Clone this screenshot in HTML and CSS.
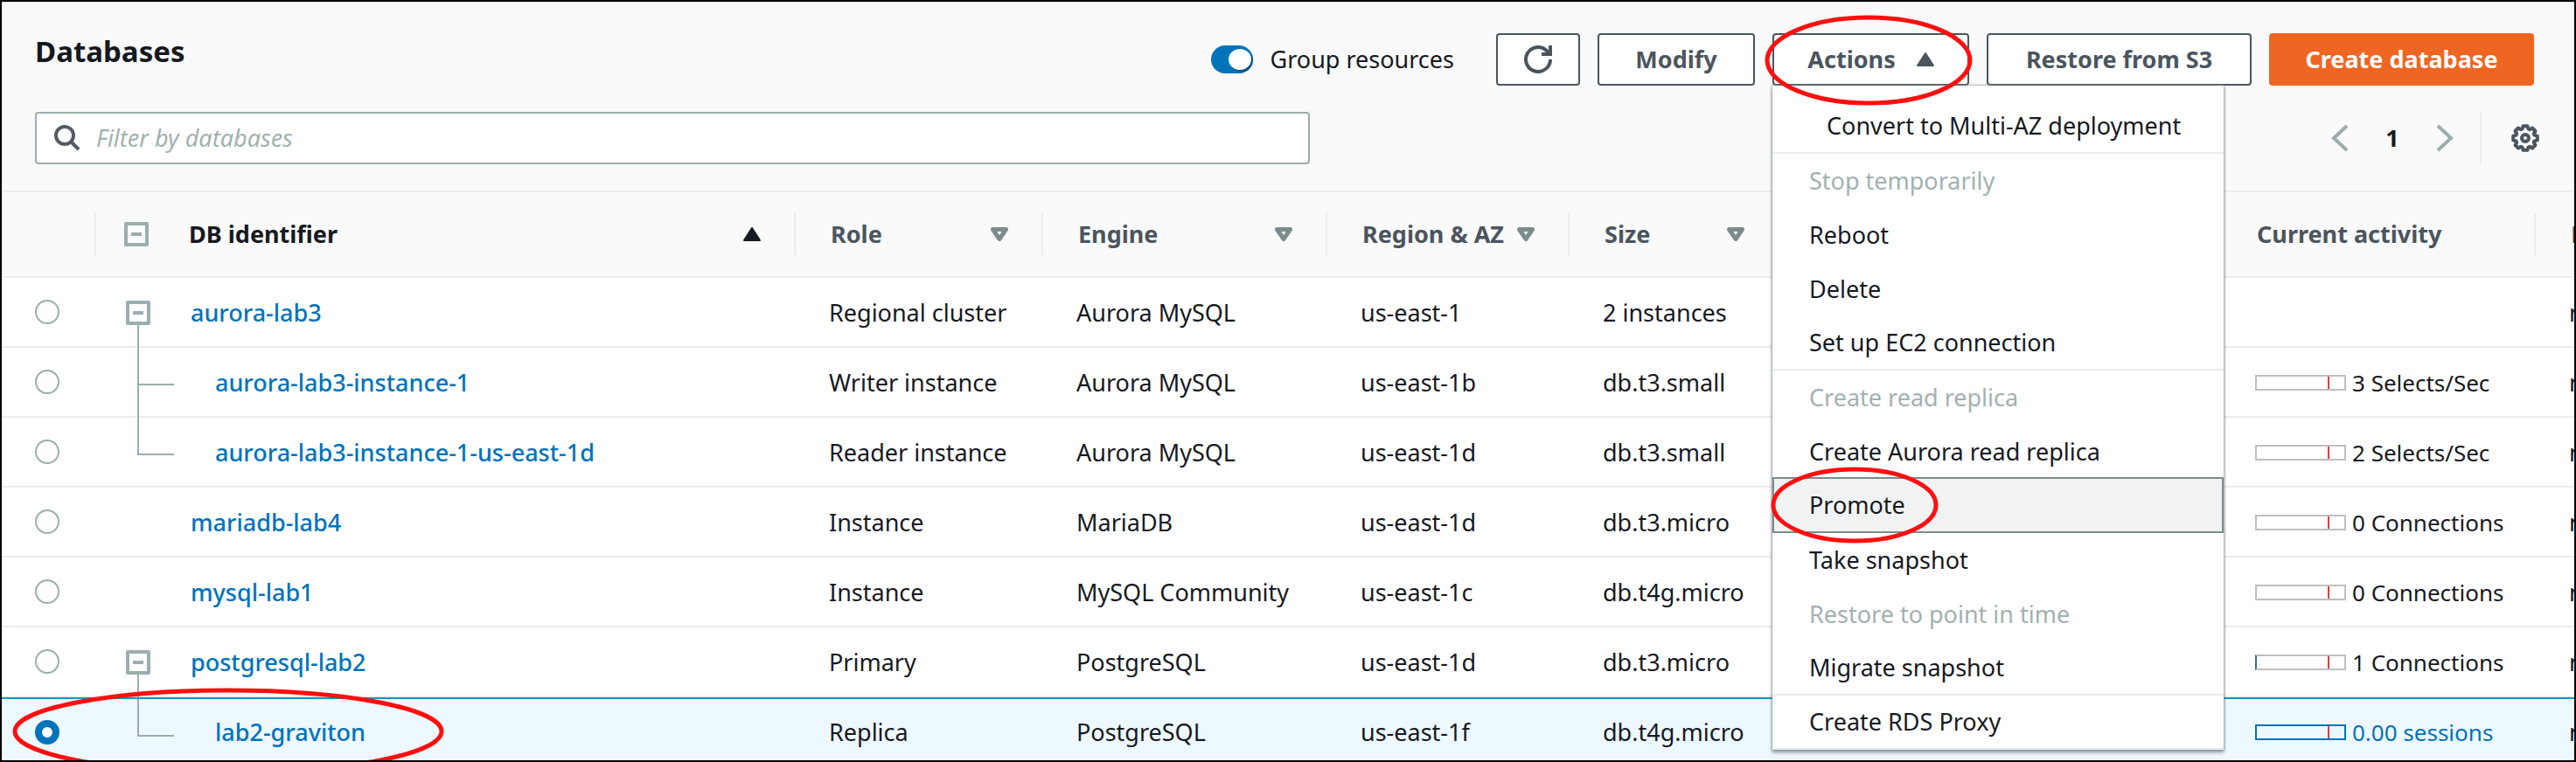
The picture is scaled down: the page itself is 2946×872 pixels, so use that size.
FILE: index.html
```html
<!DOCTYPE html>
<html lang="en">
<head>
<meta charset="utf-8">
<title>Databases</title>
<link rel="stylesheet" href="styles.css">
</head>
<body>
<svg class="defs" aria-hidden="true">
  <symbol id="collapse" viewBox="0 0 28 28"><rect x="2" y="2" width="24" height="24" fill="none" stroke="currentColor" stroke-width="4" stroke-linejoin="round"/><path d="M8 14h12" stroke="currentColor" stroke-width="4"/></symbol>
  <symbol id="sort" viewBox="0 0 20 16"><path d="M2.500 2.500h15L10 13.500z" fill="none" stroke="currentColor" stroke-width="5" stroke-linejoin="round"/></symbol>
  <symbol id="up" viewBox="0 0 20 16"><path d="M10 1 1 15h18z" fill="currentColor" stroke="currentColor" stroke-width="2" stroke-linejoin="round"/></symbol>
</svg>
<main class="panel">
  <header class="top">
    <div class="title-row">
      <h1 class="title">Databases</h1>
      <label class="group"><input class="switch" type="checkbox" role="switch" checked>Group resources</label>
      <div class="buttons">
        <button class="btn refresh" aria-label="Refresh"><svg width="32" height="32" viewBox="0 0 32 32" fill="none" stroke="currentColor" stroke-width="4"><path d="M30 16a14 14 0 1 1-4.500-10.300L29 9.500"/><path d="M30 0v10H20"/></svg></button>
        <button class="btn modify">Modify</button>
        <div class="actions">
          <button class="btn actions-btn" aria-expanded="true">Actions<svg width="20" height="16"><use href="#up"/></svg></button>
          <ul class="menu">
            <li><button class="item indent line">Convert to Multi-AZ deployment</button></li>
            <li><button class="item" disabled>Stop temporarily</button></li>
            <li><button class="item">Reboot</button></li>
            <li><button class="item">Delete</button></li>
            <li><button class="item line">Set up EC2 connection</button></li>
            <li><button class="item" disabled>Create read replica</button></li>
            <li><button class="item">Create Aurora read replica</button></li>
            <li class="marked"><button class="item current">Promote</button><svg class="ring ring-promote" viewBox="0 0 190 86"><ellipse cx="95" cy="43" rx="93" ry="41"/></svg></li>
            <li><button class="item">Take snapshot</button></li>
            <li><button class="item" disabled>Restore to point in time</button></li>
            <li><button class="item line">Migrate snapshot</button></li>
            <li><button class="item line">Create RDS Proxy</button></li>
          </ul>
          <svg class="ring ring-actions" viewBox="0 0 236 102"><ellipse cx="118" cy="51" rx="116" ry="49"/></svg>
        </div>
        <button class="btn restore">Restore from S3</button>
        <button class="btn primary">Create database</button>
      </div>
    </div>
    <div class="filter-row">
      <label class="search">
        <svg width="32" height="32" viewBox="0 0 32 32" fill="none" stroke="currentColor" stroke-width="4"><circle cx="14" cy="13" r="10"/><path d="m21 20 9 9"/></svg>
        <input class="search-input" type="text" placeholder="Filter by databases" aria-label="Filter by databases">
      </label>
      <nav class="pager" aria-label="Pages">
        <button class="icon-btn arrow" aria-label="Previous page"><svg width="20" height="32" viewBox="0 0 20 32" fill="none" stroke="currentColor" stroke-width="4"><path d="M18 2 3 16l15 14"/></svg></button>
        <span class="page">1</span>
        <button class="icon-btn arrow" aria-label="Next page"><svg width="20" height="32" viewBox="0 0 20 32" fill="none" stroke="currentColor" stroke-width="4"><path d="m2 2 15 14L2 30"/></svg></button>
        <span class="rule"></span>
        <button class="icon-btn gear" aria-label="Preferences"><svg width="32" height="32" viewBox="0 0 32 32" fill="none" stroke="currentColor" stroke-width="4" stroke-linejoin="round"><path d="M18.400 2.200 19.400 5.500 21 6.200 24 4.500 27.500 8 25.800 11 26.500 12.600 29.800 13.600V18.400L26.500 19.400 25.800 21 27.500 24 24 27.500 21 25.800 19.400 26.500 18.400 29.800H13.600L12.600 26.500 11 25.800 8 27.500 4.500 24 6.200 21 5.500 19.400 2.200 18.400V13.600L5.500 12.600 6.200 11 4.500 8 8 4.500 11 6.200 12.600 5.500 13.600 2.200z"/><circle cx="16" cy="16" r="4"/></svg></button>
      </nav>
    </div>
  </header>
  <table class="grid">
    <colgroup><col class="c-pick"><col><col class="c-role"><col class="c-engine"><col class="c-region"><col class="c-size"><col class="c-gap"><col class="c-activity"><col class="c-last"></colgroup>
    <thead>
      <tr>
        <th></th>
        <th class="sorted"><div class="head id-head"><button class="icon-btn collapse" aria-label="Collapse all"><svg width="28" height="28"><use href="#collapse"/></svg></button><span>DB identifier</span><svg class="sort" width="20" height="16"><use href="#up"/></svg></div></th>
        <th><div class="head">Role<svg class="sort" width="20" height="16"><use href="#sort"/></svg></div></th>
        <th><div class="head">Engine<svg class="sort" width="20" height="16"><use href="#sort"/></svg></div></th>
        <th><div class="head">Region &amp; AZ<svg class="sort" width="20" height="16"><use href="#sort"/></svg></div></th>
        <th><div class="head">Size<svg class="sort" width="20" height="16"><use href="#sort"/></svg></div></th>
        <th></th>
        <th><div class="head">Current activity</div></th>
        <th><div class="head">Maintenance</div></th>
      </tr>
    </thead>
    <tbody>
      <tr>
        <td class="pick"><input class="radio" type="radio" name="db" aria-label="aurora-lab3"></td>
        <td class="id parent"><div class="node"><button class="icon-btn collapse" aria-label="Collapse aurora-lab3"><svg width="28" height="28"><use href="#collapse"/></svg></button><a href="#">aurora-lab3</a></div></td>
        <td>Regional cluster</td><td>Aurora MySQL</td><td>us-east-1</td><td>2 instances</td><td></td><td></td><td>none</td>
      </tr>
      <tr>
        <td class="pick"><input class="radio" type="radio" name="db" aria-label="aurora-lab3-instance-1"></td>
        <td class="id child more"><div class="node"><a href="#">aurora-lab3-instance-1</a></div></td>
        <td>Writer instance</td><td>Aurora MySQL</td><td>us-east-1b</td><td>db.t3.small</td><td></td><td><div class="activity"><span class="bar"></span>3 Selects/Sec</div></td><td>none</td>
      </tr>
      <tr>
        <td class="pick"><input class="radio" type="radio" name="db" aria-label="aurora-lab3-instance-1-us-east-1d"></td>
        <td class="id child"><div class="node"><a href="#">aurora-lab3-instance-1-us-east-1d</a></div></td>
        <td>Reader instance</td><td>Aurora MySQL</td><td>us-east-1d</td><td>db.t3.small</td><td></td><td><div class="activity"><span class="bar"></span>2 Selects/Sec</div></td><td>none</td>
      </tr>
      <tr>
        <td class="pick"><input class="radio" type="radio" name="db" aria-label="mariadb-lab4"></td>
        <td class="id"><div class="node"><a href="#">mariadb-lab4</a></div></td>
        <td>Instance</td><td>MariaDB</td><td>us-east-1d</td><td>db.t3.micro</td><td></td><td><div class="activity"><span class="bar"></span>0 Connections</div></td><td>none</td>
      </tr>
      <tr>
        <td class="pick"><input class="radio" type="radio" name="db" aria-label="mysql-lab1"></td>
        <td class="id"><div class="node"><a href="#">mysql-lab1</a></div></td>
        <td>Instance</td><td>MySQL Community</td><td>us-east-1c</td><td>db.t4g.micro</td><td></td><td><div class="activity"><span class="bar"></span>0 Connections</div></td><td>none</td>
      </tr>
      <tr>
        <td class="pick"><input class="radio" type="radio" name="db" aria-label="postgresql-lab2"></td>
        <td class="id parent"><div class="node"><button class="icon-btn collapse" aria-label="Collapse postgresql-lab2"><svg width="28" height="28"><use href="#collapse"/></svg></button><a href="#">postgresql-lab2</a></div></td>
        <td>Primary</td><td>PostgreSQL</td><td>us-east-1d</td><td>db.t3.micro</td><td></td><td><div class="activity"><span class="bar used"></span>1 Connections</div></td><td>none</td>
      </tr>
      <tr class="selected">
        <td class="pick"><input class="radio" type="radio" name="db" aria-label="lab2-graviton" checked><svg class="ring ring-row" viewBox="0 0 492 98"><ellipse cx="246" cy="49" rx="244" ry="47"/></svg></td>
        <td class="id child"><div class="node"><a href="#">lab2-graviton</a></div></td>
        <td>Replica</td><td>PostgreSQL</td><td>us-east-1f</td><td>db.t4g.micro</td><td></td><td><div class="activity live"><span class="bar"></span>0.00 sessions</div></td><td>none</td>
      </tr>
    </tbody>
  </table>
</main>
</body>
</html>
```

FILE: styles.css
```css
* { box-sizing: border-box; }

body {
  margin: 0;
  font: 27px/36px "Noto Sans", "Open Sans", sans-serif;
  color: #16191f;
  background: #fff;
}

button, input { font: inherit; color: inherit; }
button { cursor: pointer; }
svg { display: block; flex: none; }
.defs { position: absolute; width: 0; height: 0; }

.panel {
  height: 100vh;
  overflow: hidden;
  border: 2px solid #000;
}

.top {
  padding: 36px 46px 30px 38px;
  background: #fafafa;
}

.title-row {
  display: flex;
  align-items: center;
  height: 60px;
}

.title {
  margin: 0 auto 0 0;
  padding-bottom: 18px;
  font-size: 33px;
  line-height: 44px;
}

.group {
  display: flex;
  align-items: center;
  gap: 20px;
  margin-right: 48px;
}

.switch {
  appearance: none;
  width: 48px;
  height: 32px;
  margin: 0;
  padding: 4px 2px;
  border-radius: 16px;
  background: #0073bb;
}

.switch::before {
  content: "";
  display: block;
  width: 26px;
  height: 24px;
  margin-left: auto;
  border-radius: 50%;
  background: #fff;
  box-shadow: 2px 2px 2px #00000055;
}

.buttons { display: flex; gap: 20px; }

.btn {
  display: flex;
  align-items: center;
  justify-content: center;
  height: 60px;
  padding: 0 32px;
  border: 2px solid #4b555e;
  border-radius: 4px;
  background: #fff;
  color: #4b555e;
  font-weight: 700;
  white-space: nowrap;
}

.refresh { min-width: 96px; padding: 0; }
.modify { min-width: 180px; }
.actions-btn { min-width: 225px; gap: 24px; }
.restore, .primary { min-width: 303px; }
.primary { border-color: #ef6522; background: #ef6522; color: #fff; }

.actions { position: relative; }

.menu {
  position: absolute;
  z-index: 2;
  top: 60px;
  left: 0;
  width: 516px;
  margin: 0;
  padding: 16px 0 0;
  list-style: none;
  background: #fff;
  box-shadow: 0 0 2px 1px #879596aa, 0 3px 4px #00000066;
}

.item {
  display: block;
  width: 100%;
  height: 62px;
  padding: 0 42px;
  border: 0 solid #eaeded;
  background: none;
  text-align: left;
  white-space: nowrap;
}

.item.indent { padding-left: 62px; }
.item.line { border-bottom-width: 2px; }
.item:disabled { color: #a2b1b1; }

.item.current {
  height: 64px;
  margin-top: -2px;
  padding: 0 40px;
  border: 2px solid #7b8c8c;
  background: #f1f3f3;
}

.marked { position: relative; }

.ring {
  position: absolute;
  z-index: 3;
  overflow: visible;
  fill: none;
  stroke: #ff0f0f;
  stroke-width: 5px;
  pointer-events: none;
}

.ring-promote { top: -11px; left: -1px; width: 190px; height: 86px; }
.ring-actions { top: -20px; left: -8px; width: 236px; height: 102px; }
.ring-row { top: -12px; left: 13px; width: 492px; height: 98px; }

.filter-row {
  display: flex;
  align-items: center;
  justify-content: space-between;
  margin-top: 30px;
}

.search {
  display: flex;
  align-items: center;
  gap: 18px;
  width: 51%;
  height: 60px;
  padding: 0 18px;
  border: 2px solid #9baeae;
  border-radius: 4px;
  background: #fff;
  color: #545b64;
}

.search-input {
  flex: 1;
  min-width: 0;
  padding: 0;
  border: 0;
  outline: 0;
  background: none;
}

.search-input::placeholder { color: #a2b1b1; font-style: italic; opacity: 1; }

.pager { display: flex; align-items: center; }
.icon-btn { padding: 0; border: 0; background: none; }
.arrow { color: #9baeae; }
.page { width: 100px; text-align: center; font-weight: 700; }
.rule { width: 2px; height: 60px; margin: 0 34px 0 30px; background: #eaeded; }
.gear { margin-right: -6px; color: #4b555e; }

.grid {
  width: 100%;
  table-layout: fixed;
  border-spacing: 0;
}

.c-pick { width: 106px; }
.c-role { width: 283px; }
.c-engine { width: 325px; }
.c-region { width: 277px; }
.c-size { width: 240px; }
.c-gap { width: 506px; }
.c-activity { width: 359px; }
.c-last { width: 46px; }

th {
  height: 100px;
  padding: 0;
  border: solid #eaeded;
  border-width: 2px 0;
  background: #fafafa;
  color: #4b555e;
  text-align: left;
  white-space: nowrap;
}

.head {
  display: flex;
  align-items: center;
  height: 48px;
  padding: 0 38px 0 40px;
  border-left: 2px solid #eaeded;
}

.sorted { color: #16191f; }
.id-head { padding-left: 32px; gap: 46px; }
.sort { margin-left: auto; color: #7b8c8c; }
.sorted .sort { color: #16191f; }
.collapse { color: #9baeae; }

td {
  height: 80px;
  padding: 2px 0 0 40px;
  border-bottom: 2px solid #eaeded;
  white-space: nowrap;
}

th:last-child, td:last-child { overflow: hidden; }

.pick { position: relative; padding: 0 0 0 38px; }

.radio {
  appearance: none;
  display: block;
  width: 28px;
  height: 28px;
  margin: 0;
  border: 2px solid #9baeae;
  border-radius: 50%;
  background: #fff;
}

.radio:checked { border: 8px solid #0073bb; }

.id { position: relative; padding-left: 110px; }
.id a { color: #0073bb; font-weight: 500; text-decoration: none; }
.child { padding-left: 138px; }
.node { display: flex; align-items: center; gap: 46px; }
.parent { padding-left: 36px; }

.parent::after, .child::before, .more::after {
  content: "";
  position: absolute;
  left: 49px;
  width: 2px;
  background: #9baeae;
}

.parent::after { top: 54px; bottom: -2px; }
.child::before {
  top: 0;
  width: 40px;
  height: 41px;
  border: solid #9baeae;
  border-width: 0 0 2px 2px;
  background: none;
}
.more::after { top: 40px; bottom: -2px; }

.selected td { padding-top: 0; border-top: 2px solid #0099c3; background: #edf8ff; }

.activity { display: flex; align-items: center; gap: 7px; font-size: 26px; }

.bar {
  width: 104px;
  height: 18px;
  border: 2px solid #bfbfbf;
  background: linear-gradient(#e03c3c, #e03c3c) 81px 0 / 2px 100% no-repeat;
}

.used { border-left-color: #3a6f8f; }
.live { color: #0073bb; }
.live .bar { border-color: #0073bb; }
```
